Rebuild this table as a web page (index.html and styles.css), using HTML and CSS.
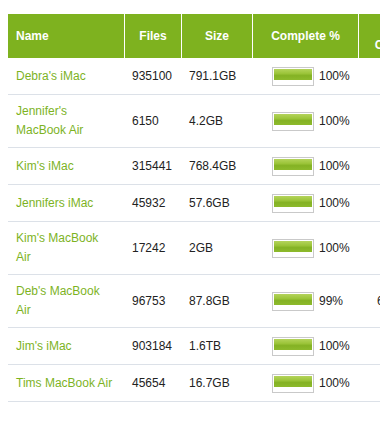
FILE: index.html
```html
<!DOCTYPE html>
<html>
<head>
<meta charset="utf-8">
<link rel="stylesheet" href="styles.css">
</head>
<body>
<div class="page">
  <table class="machines">
    <colgroup>
      <col class="c-name"><col class="c-files"><col class="c-size"><col class="c-pct"><col class="c-last">
    </colgroup>
    <thead>
      <tr>
        <th class="left">Name</th>
        <th>Files</th>
        <th>Size</th>
        <th>Complete %</th>
        <th>Last<br>Checkin</th>
      </tr>
    </thead>
    <tbody>
      <tr><td class="name">Debra's iMac</td><td>935100</td><td>791.1GB</td><td class="pct"><div class="pw"><span class="bar"><span class="fill" style="width:100%"></span></span>100%</div></td><td class="last"></td></tr>
      <tr><td class="name">Jennifer's MacBook Air</td><td>6150</td><td>4.2GB</td><td class="pct"><div class="pw"><span class="bar"><span class="fill" style="width:100%"></span></span>100%</div></td><td class="last"></td></tr>
      <tr><td class="name">Kim's iMac</td><td>315441</td><td>768.4GB</td><td class="pct"><div class="pw"><span class="bar"><span class="fill" style="width:100%"></span></span>100%</div></td><td class="last"></td></tr>
      <tr><td class="name">Jennifers iMac</td><td>45932</td><td>57.6GB</td><td class="pct"><div class="pw"><span class="bar"><span class="fill" style="width:100%"></span></span>100%</div></td><td class="last"></td></tr>
      <tr><td class="name">Kim's MacBook Air</td><td>17242</td><td>2GB</td><td class="pct"><div class="pw"><span class="bar"><span class="fill" style="width:100%"></span></span>100%</div></td><td class="last"></td></tr>
      <tr><td class="name">Deb's MacBook Air</td><td>96753</td><td>87.8GB</td><td class="pct"><div class="pw"><span class="bar"><span class="fill" style="width:99%"></span></span>99%</div></td><td class="last">6 days</td></tr>
      <tr><td class="name">Jim's iMac</td><td>903184</td><td>1.6TB</td><td class="pct"><div class="pw"><span class="bar"><span class="fill" style="width:100%"></span></span>100%</div></td><td class="last"></td></tr>
      <tr><td class="name">Tims MacBook Air</td><td>45654</td><td>16.7GB</td><td class="pct"><div class="pw"><span class="bar"><span class="fill" style="width:100%"></span></span>100%</div></td><td class="last"></td></tr>
    </tbody>
  </table>
</div>
</body>
</html>
```
FILE: styles.css
```css
html, body {
  margin: 0;
  padding: 0;
  background: #fff;
}
body {
  overflow: hidden;
  font-family: "Liberation Sans", Arial, Helvetica, sans-serif;
  font-size: 12px;
  color: #222;
}
.page {
  width: 380px;
  height: 423px;
  overflow: hidden;
  padding: 14px 0 0 8px;
  box-sizing: border-box;
}
.machines {
  table-layout: fixed;
  border-collapse: separate;
  border-spacing: 0;
  width: 429px;
}
.c-name { width: 116px; }
.c-files { width: 57px; }
.c-size { width: 71px; }
.c-pct { width: 106px; }
.c-last { width: 79px; }

.machines th {
  background: #7eb21f;
  color: #fff;
  font-weight: bold;
  text-align: center;
  padding: 4px 4px;
  line-height: 18px;
  border-left: 1px solid #fff;
  vertical-align: middle;
}
.machines th.left {
  text-align: left;
  border-left: 0;
  padding-left: 8px;
}
.machines td {
  padding: 7px 8px;
  line-height: 19px;
  border-bottom: 1px solid #dce1e8;
  vertical-align: middle;
  text-align: left;
}
.machines td.name {
  color: #7db31f;
  padding-right: 9px;
}
.machines td.pct {
  padding-left: 20px;
}
.machines td.last {
  padding-left: 19px;
  white-space: nowrap;
}
.pw {
  display: flex;
  align-items: center;
  height: 22px;
}
.bar {
  display: block;
  box-sizing: border-box;
  width: 42px;
  height: 19px;
  border: 1px solid #c9c9c9;
  padding: 1px;
  margin-right: 5px;
  background: #fff;
}
.fill {
  display: block;
  height: 11px;
  background: linear-gradient(to bottom, #b4d35b 0%, #9cc53a 40%, #84b224 60%, #8dba2c 100%);
}
```
